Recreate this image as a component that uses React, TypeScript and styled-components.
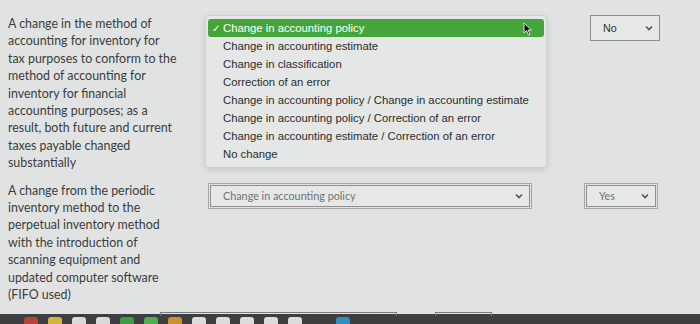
import React from "react";
import styled, { createGlobalStyle } from "styled-components";

const GlobalStyles = createGlobalStyle`
  html, body {
    margin: 0;
    height: 100%;
    overflow: hidden;
  }
  body {
    background: #e1e3e3;
    font-family: Lato, "Open Sans", sans-serif;
  }
`;

const Page = styled.div`
  display: flex;
  flex-direction: column;
  height: 324px;
`;

const Content = styled.div`
  flex: 1;
  display: flex;
  flex-direction: column;
  padding: 15px 0 0 8px;
`;

const Row = styled.div<{ $gap: number }>`
  display: flex;
  align-items: flex-start;
  margin-bottom: ${(p) => p.$gap}px;
`;

const Question = styled.div`
  width: 172px;
  font-size: 12.4px;
  line-height: 17.4px;
  color: #3a3c3c;
  white-space: nowrap;
`;

const Line = styled.div``;

const Middle = styled.div<{ $pl: number; $pt?: number }>`
  width: 340px;
  padding-left: ${(p) => p.$pl}px;
  padding-top: ${(p) => p.$pt ?? 0}px;
`;

const Menu = styled.ul`
  list-style: none;
  margin: 0;
  padding: 3px 2px 4px;
  width: 336px;
  background: #e5e7e7;
  border: 1px solid #cfd1d1;
  border-radius: 4px;
  box-shadow: 0 2px 6px rgba(0, 0, 0, 0.12);
  font-family: "Liberation Sans", Arial, sans-serif;
  font-size: 11.3px;
`;

const MenuItem = styled.li<{ $selected?: boolean }>`
  display: flex;
  align-items: center;
  height: 18px;
  padding-left: 4px;
  border-radius: 3px;
  color: ${(p) => (p.$selected ? "#ffffff" : "#2a2c2c")};
  background: ${(p) => (p.$selected ? "#44a63a" : "transparent")};
  position: relative;
`;

const Check = styled.span`
  width: 11px;
  font-size: 10px;
`;

const Cursor = styled.svg`
  position: absolute;
  right: 11px;
  top: 3px;
`;

const Select = styled.div<{ $w: number; $h: number; $double?: boolean }>`
  display: flex;
  align-items: center;
  justify-content: space-between;
  width: ${(p) => p.$w}px;
  height: ${(p) => p.$h}px;
  box-sizing: border-box;
  padding: 0 6px 0 12px;
  border: 1px solid #8f8f8f;
  outline: ${(p) => (p.$double ? "1px solid #a9a9a9" : "none")};
  outline-offset: 1px;
  background: #e6e8e8;
  font-size: 10.8px;
`;

const SelectText = styled.span<{ $dark?: boolean }>`
  color: ${(p) => (p.$dark ? "#333" : "#707272")};
  font-family: ${(p) => (p.$dark ? '"Liberation Sans", Arial, sans-serif' : "Lato, sans-serif")};
`;

const Right = styled.div<{ $pl: number; $pt: number }>`
  padding-left: ${(p) => p.$pl}px;
  padding-top: ${(p) => p.$pt}px;
`;

const Dock = styled.div`
  height: 10px;
  background: #3d3f41;
  display: flex;
  align-items: flex-end;
  gap: 10px;
  padding-left: 24px;
  position: relative;
`;

const DockIcon = styled.span<{ $c: string }>`
  width: 14px;
  height: 7px;
  border-radius: 3px 3px 0 0;
  background: ${(p) => p.$c};
`;

const Ghost = styled.span<{ $l: number; $w: number }>`
  position: absolute;
  top: -2px;
  left: ${(p) => p.$l}px;
  width: ${(p) => p.$w}px;
  height: 3px;
  border: 1px solid #7a7a7a;
  border-bottom: none;
`;

function Chevron() {
  return (
    <svg width="8" height="6" viewBox="0 0 8 6">
      <path d="M1 1.5 L4 4.5 L7 1.5" fill="none" stroke="#555" strokeWidth="1.6" />
    </svg>
  );
}

const options = [
  "Change in accounting policy",
  "Change in accounting estimate",
  "Change in classification",
  "Correction of an error",
  "Change in accounting policy / Change in accounting estimate",
  "Change in accounting policy / Correction of an error",
  "Change in accounting estimate / Correction of an error",
  "No change",
];

const q1 = [
  "A change in the method of",
  "accounting for inventory for",
  "tax purposes to conform to the",
  "method of accounting for",
  "inventory for financial",
  "accounting purposes; as a",
  "result, both future and current",
  "taxes payable changed",
  "substantially",
];

const q2 = [
  "A change from the periodic",
  "inventory method to the",
  "perpetual inventory method",
  "with the introduction of",
  "scanning equipment and",
  "updated computer software",
  "(FIFO used)",
];

const dockColors = ["#b8433a", "#d6b43a", "#d9d9d9", "#d9d9d9", "#3e9b46", "#4caf50", "#c8922e", "#dcdcdc", "#dcdcdc", "#dcdcdc", "#dcdcdc", "#dcdcdc", "#3d3f41", "#2f8fbf", "#3d3f41"];

export default function App() {
  return (
    <Page>
      <GlobalStyles />
      <Content>
        <Row $gap={10}>
          <Question>
            {q1.map((l) => (
              <Line key={l}>{l}</Line>
            ))}
          </Question>
          <Middle $pl={25}>
            <Menu>
              {options.map((o, i) => (
                <MenuItem key={o} $selected={i === 0}>
                  <Check>{i === 0 ? "✓" : ""}</Check>
                  {o}
                  {i === 0 && (
                    <Cursor width="10" height="14" viewBox="0 0 10 14">
                      <path d="M1 1 L1 11 L3.5 8.5 L5.5 13 L7 12.3 L5 8 L8.5 8 Z" fill="#111" stroke="#fff" strokeWidth="0.8" />
                    </Cursor>
                  )}
                </MenuItem>
              ))}
            </Menu>
          </Middle>
          <Right $pl={45} $pt={0}>
            <Select $w={70} $h={26}>
              <SelectText $dark>No</SelectText>
              <Chevron />
            </Select>
          </Right>
        </Row>
        <Row $gap={0}>
          <Question>
            {q2.map((l) => (
              <Line key={l}>{l}</Line>
            ))}
          </Question>
          <Middle $pl={30} $pt={3}>
            <Select $w={320} $h={22} $double>
              <SelectText>Change in accounting policy</SelectText>
              <Chevron />
            </Select>
          </Middle>
          <Right $pl={36} $pt={3}>
            <Select $w={70} $h={22} $double>
              <SelectText>Yes</SelectText>
              <Chevron />
            </Select>
          </Right>
        </Row>
      </Content>
      <Dock>
        <Ghost $l={160} $w={235} />
        <Ghost $l={435} $w={55} />
        {dockColors.map((c, i) => (
          <DockIcon key={i} $c={c} />
        ))}
      </Dock>
    </Page>
  );
}
